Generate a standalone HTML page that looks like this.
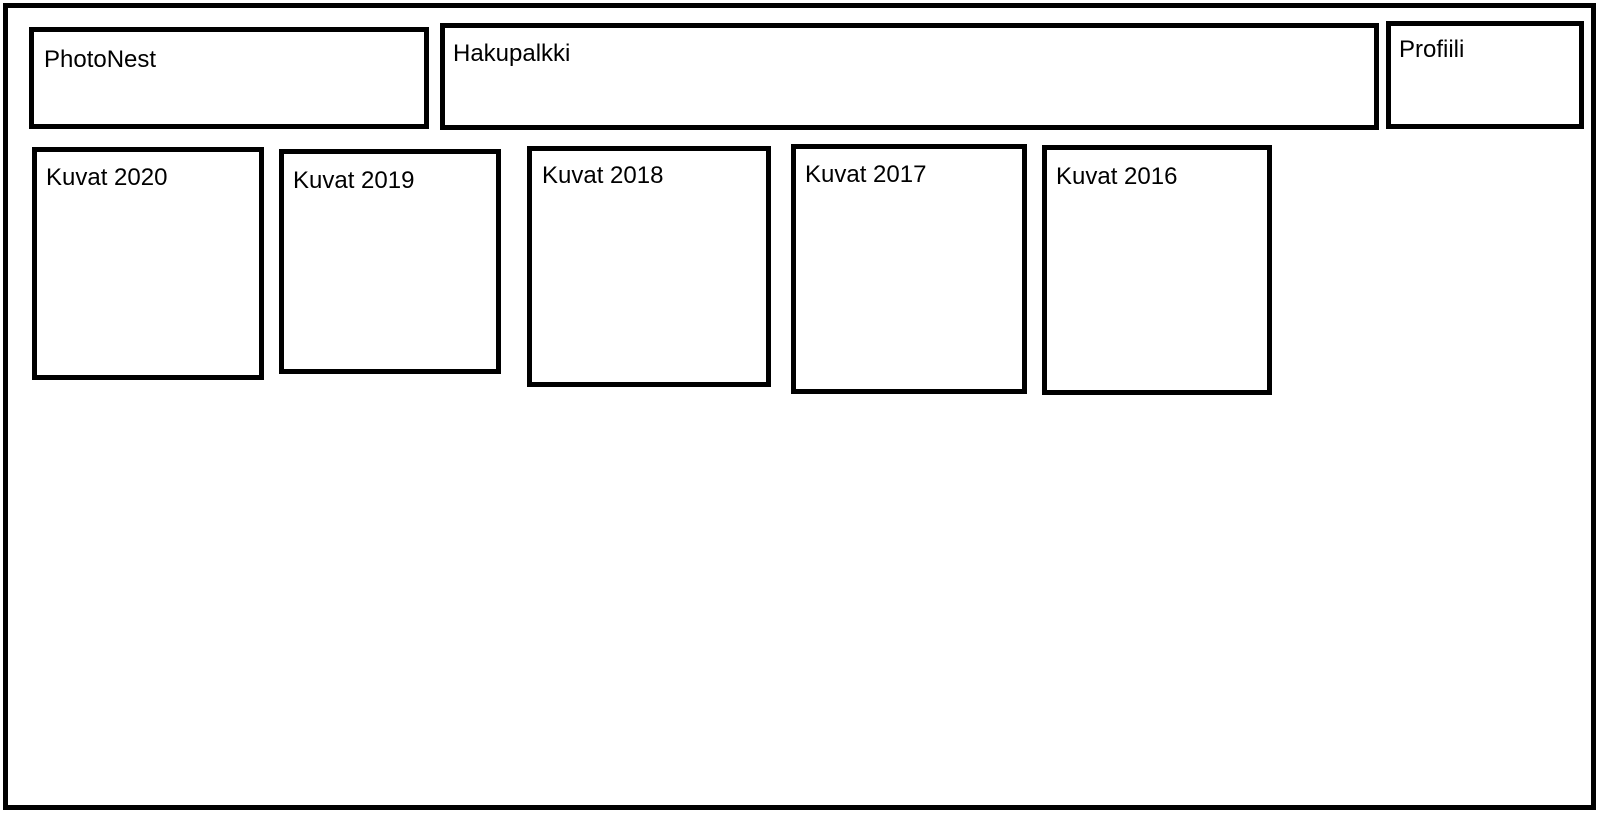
<!DOCTYPE html>
<html><head><meta charset="utf-8"><style>
html,body{margin:0;padding:0;background:#fff;width:1604px;height:814px;overflow:hidden;position:relative;font-family:"Liberation Sans",sans-serif;}
.b{position:absolute;border:5px solid #000;box-sizing:border-box;}
.t{position:absolute;font-size:24px;line-height:1;color:#000;white-space:nowrap;}
</style></head><body>
<div class="b" style="left:3px;top:3px;width:1593px;height:807px"></div>
<div class="b" style="left:29px;top:27px;width:400px;height:102px"></div>
<div class="b" style="left:440px;top:23px;width:939px;height:107px"></div>
<div class="b" style="left:1386px;top:21px;width:198px;height:108px"></div>
<div class="b" style="left:32px;top:147px;width:232px;height:233px"></div>
<div class="b" style="left:279px;top:149px;width:222px;height:225px"></div>
<div class="b" style="left:527px;top:146px;width:244px;height:241px"></div>
<div class="b" style="left:791px;top:144px;width:236px;height:250px"></div>
<div class="b" style="left:1042px;top:145px;width:230px;height:250px"></div>
<div class="t" style="left:44px;top:48px">PhotoNest</div>
<div class="t" style="left:453px;top:42px">Hakupalkki</div>
<div class="t" style="left:1399px;top:38px">Profiili</div>
<div class="t" style="left:46px;top:166px">Kuvat 2020</div>
<div class="t" style="left:293px;top:169px">Kuvat 2019</div>
<div class="t" style="left:542px;top:164px">Kuvat 2018</div>
<div class="t" style="left:805px;top:163px">Kuvat 2017</div>
<div class="t" style="left:1056px;top:165px">Kuvat 2016</div>
</body></html>
